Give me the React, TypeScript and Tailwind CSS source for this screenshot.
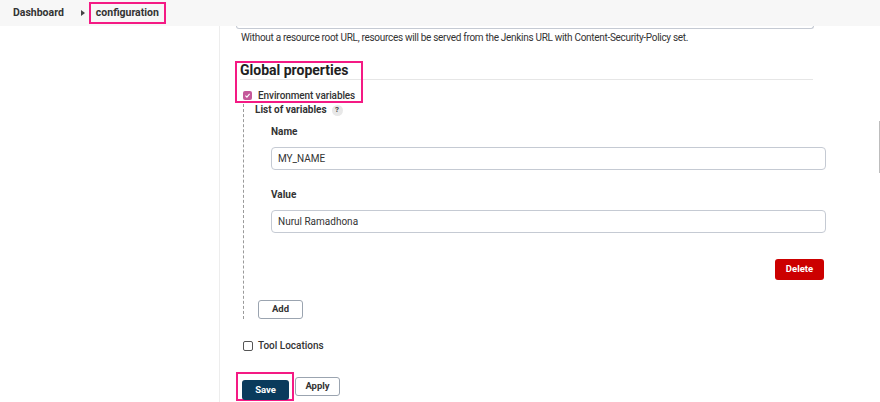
import React from "react"

const font = { fontFamily: 'Roboto, "Liberation Sans", Arial, sans-serif' }

function Check({ checked }: { checked?: boolean }) {
  if (checked) {
    return (
      <span className="flex h-[9px] w-[9px] items-center justify-center rounded-[2px] bg-[#c5589a]">
        <svg viewBox="0 0 10 10" className="h-[7px] w-[7px]">
          <path d="M2 5.2 L4.2 7.3 L8 2.8" fill="none" stroke="white" strokeWidth="1.6" />
        </svg>
      </span>
    )
  }
  return <span className="block h-[10px] w-[10px] rounded-[2px] border border-[#555] bg-white" />
}

export default function App() {
  return (
    <div className="relative h-[402px] w-[880px] overflow-hidden bg-white text-[#333]" style={font}>
      {/* breadcrumb bar */}
      <div className="flex h-[26px] items-center bg-[#f7f7f7] pl-[13px]">
        <span className="text-[10.5px] font-bold leading-[14px] text-[#333]">Dashboard</span>
        <svg viewBox="0 0 4 6" className="ml-[17px] h-[6px] w-[4px]">
          <path d="M0 0 L4 3 L0 6 Z" fill="#444" />
        </svg>
        <span className="ml-[4px] border-2 border-[#f41a84] px-[5px] py-[2px] text-[10.5px] font-bold leading-[14px] text-[#333]">
          configuration
        </span>
      </div>

      <div className="flex h-[376px]">
        <div className="w-[220px] shrink-0 border-r border-[#ededed]" />

        <div className="flex flex-col pl-[16px]">
          <div className="h-[3px] w-[578px] rounded-b-[4px] border-x border-b border-[#c5cad3]" />
          <p className="ml-[5px] mt-[2px] text-[10px] leading-[14px] tracking-[-0.3px]">
            Without a resource root URL, resources will be served from the Jenkins URL with Content-Security-Policy set.
          </p>

          <div className="relative mt-[17px]">
            <div className="absolute left-[-1px] top-[-1px] h-[42px] w-[128px] border-2 border-[#f41a84]" />
            <h2 className="ml-[4px] w-[573px] border-b border-[#e6e6e6] pb-[1px] text-[14px] font-bold leading-[16px] text-[#222]">
              Global properties
            </h2>
            <div className="mt-[11px] flex h-[9px] items-center">
              <span className="ml-[7px]">
                <Check checked />
              </span>
              <span className="ml-[6px] text-[10px] font-medium leading-[12px] tracking-[-0.1px]">Environment variables</span>
            </div>
          </div>

          <div className="ml-[7px] mt-[4px] border-l border-dashed border-[#9a9a9a] pl-[11px]">
            <div className="flex items-center text-[10px] font-bold leading-[12px]">
              List of variables
              <span className="ml-[5px] flex h-[11px] w-[11px] items-center justify-center rounded-full bg-[#e8e8e8] text-[8px] font-bold text-[#444]">
                ?
              </span>
            </div>

            <div className="pl-[16px]">
              <div className="mt-[10px] text-[10px] font-bold leading-[12px]">Name</div>
              <div className="mt-[9px] flex h-[23px] w-[555px] items-center rounded-[4px] border border-[#c5cad3] pl-[6px] text-[10px]">
                MY_NAME
              </div>
              <div className="mt-[19px] text-[10px] font-bold leading-[12px]">Value</div>
              <div className="mt-[9px] flex h-[23px] w-[555px] items-center rounded-[4px] border border-[#c5cad3] pl-[6px] text-[10px]">
                Nurul Ramadhona
              </div>
              <div className="mt-[26px] flex w-[555px] justify-end pr-[2px]">
                <button className="h-[21px] w-[49px] rounded-[3px] bg-[#cc0000] text-[9.5px] font-bold text-white">
                  Delete
                </button>
              </div>
            </div>

            <button className="ml-[3px] mt-[20px] block h-[19px] w-[45px] rounded-[3px] border border-[#9ba4b0] bg-white text-[9.5px] font-bold text-[#333]">
              Add
            </button>
          </div>

          <div className="mt-[22px] flex h-[10px] items-center">
            <span className="ml-[7px]">
              <Check />
            </span>
            <span className="ml-[5px] text-[10px] font-medium leading-[12px]">Tool Locations</span>
          </div>

          <div className="mt-[25px] flex items-start">
            <div className="relative ml-[6px]">
              <div className="absolute left-[-6px] top-[-4px] h-[29px] w-[58px] border-2 border-[#f41a84]" />
              <button className="relative h-[20px] w-[47px] rounded-[3px] bg-[#0a3b5c] text-[9.5px] font-bold text-white">
                Save
              </button>
            </div>
            <button className="ml-[6px] mt-[1px] h-[19px] w-[45px] rounded-[3px] border border-[#9ba4b0] bg-white text-[9.5px] font-bold text-[#333]">
              Apply
            </button>
          </div>
        </div>
      </div>

      <div className="absolute right-0 top-[121px] h-[52px] w-px bg-[#bdbdbd]" />
    </div>
  )
}
